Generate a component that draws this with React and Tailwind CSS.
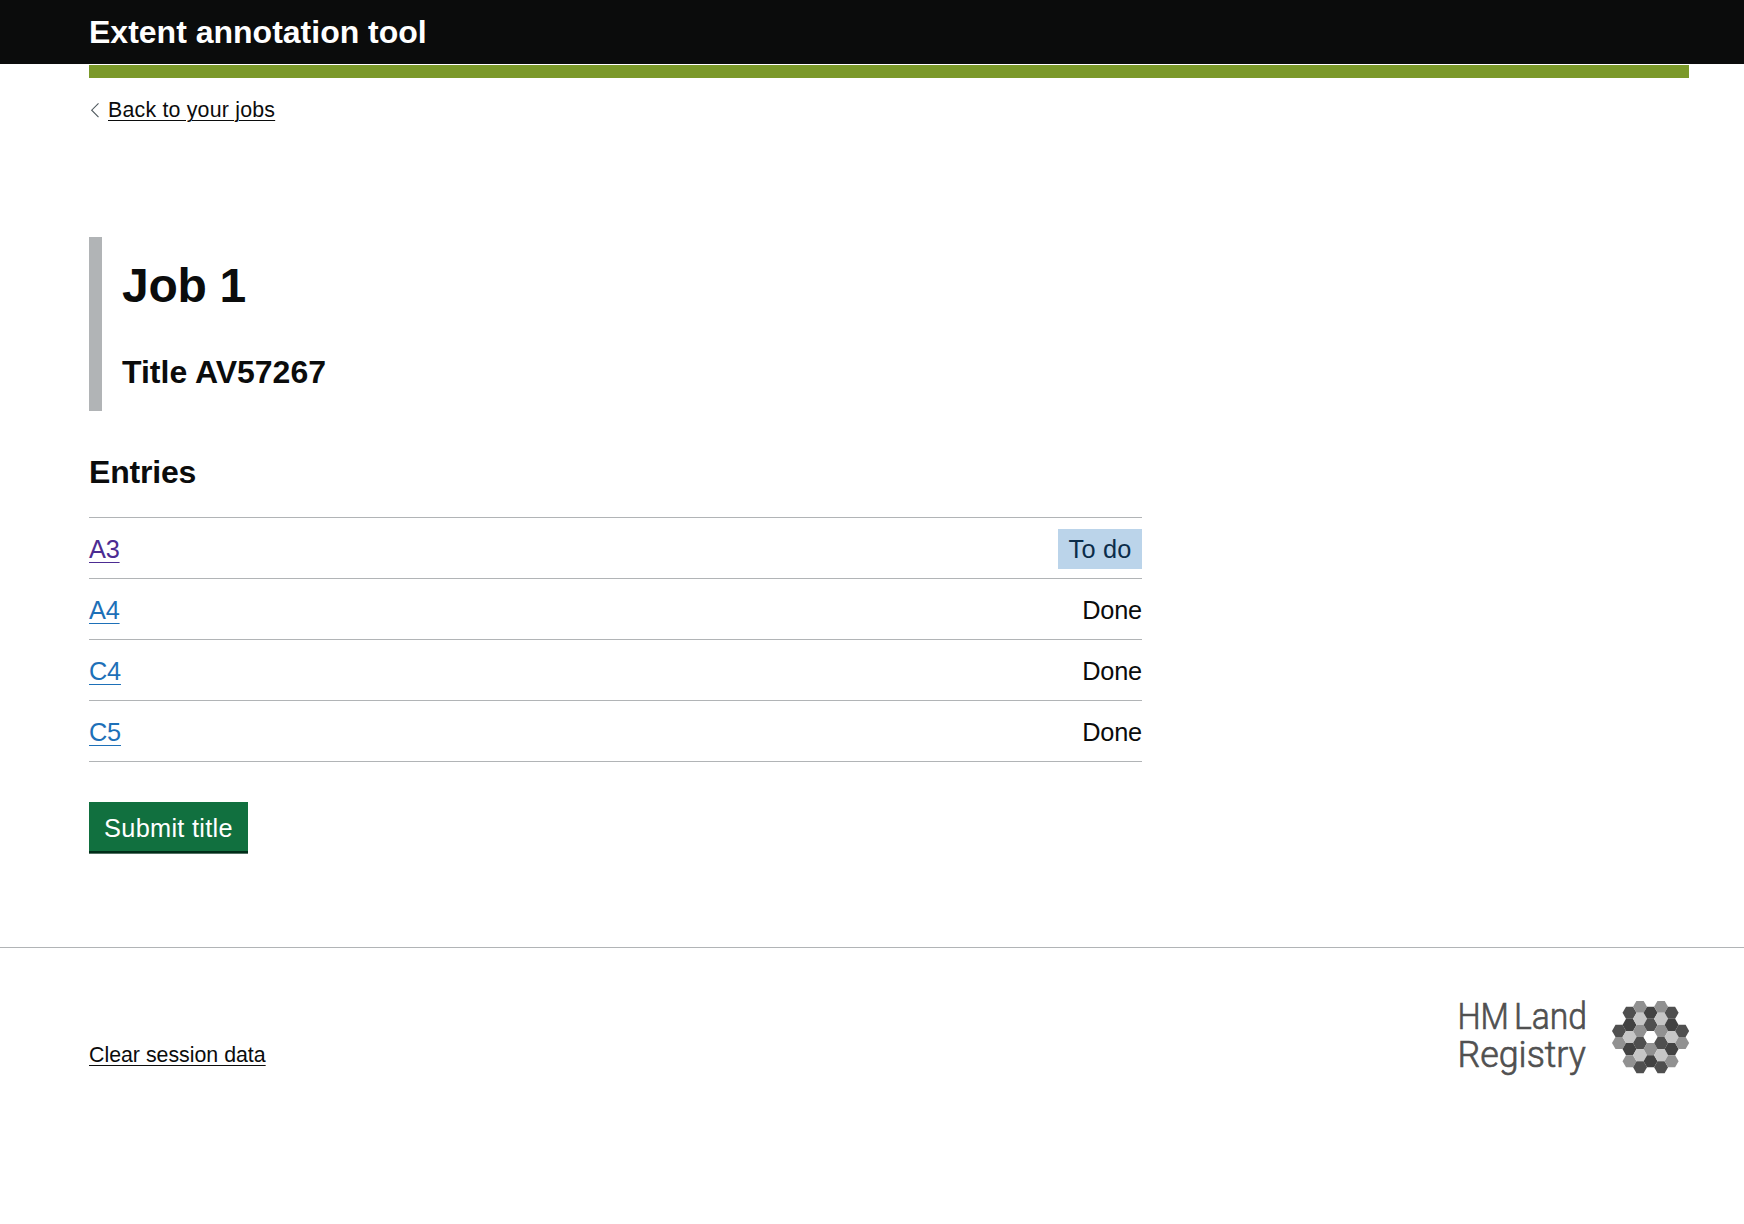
import React from "react";

const entries = [
  { name: "A3", done: false, visited: true },
  { name: "A4", done: true },
  { name: "C4", done: true },
  { name: "C5", done: true },
];

const DARKEST = "#424242";
const DARK = "#4f4f4f";
const MID = "#919191";
const LIGHT = "#c6c6c6";
const WHITE = "#ffffff";

// Honeycomb columns from left to right; each cell is listed top to bottom.
const columns = [
  { y: 29.9, cells: [DARK, MID] },
  { y: 11.8, cells: [DARK, DARKEST, LIGHT, DARKEST, MID] },
  { y: 5.8, cells: [MID, LIGHT, MID, DARK, LIGHT, DARK] },
  { y: 11.8, cells: [DARKEST, DARK, WHITE, MID, DARKEST] },
  { y: 5.8, cells: [MID, LIGHT, MID, DARK, LIGHT, DARK] },
  { y: 11.8, cells: [DARK, DARKEST, LIGHT, DARKEST, MID] },
  { y: 29.9, cells: [DARK, MID] },
];

function hexagon(cx, cy) {
  return [
    [cx - 7, cy],
    [cx - 3.5, cy - 6.05],
    [cx + 3.5, cy - 6.05],
    [cx + 7, cy],
    [cx + 3.5, cy + 6.05],
    [cx - 3.5, cy + 6.05],
  ]
    .map((p) => p.join(","))
    .join(" ");
}

function Honeycomb() {
  return (
    <svg width="78" height="73" viewBox="0 0 78 73" aria-hidden="true">
      {columns.map((col, i) =>
        col.cells.map((fill, j) => (
          <polygon key={`${i}-${j}`} points={hexagon(7 + i * 10.52, col.y + j * 12.1)} fill={fill} />
        ))
      )}
    </svg>
  );
}

function Wordmark() {
  return (
    <svg
      width="140"
      height="96"
      viewBox="-2 -10 140 96"
      className="-mt-[10px] -ml-[2px] max-w-none font-['Roboto',sans-serif] font-light"
      fill="#505050"
      stroke="#505050"
      strokeWidth="0.7"
      fontSize="37.5"
    >
      <text x="-0.6" y="31.4" textLength="51.5" lengthAdjust="spacingAndGlyphs">HM</text>
      <text x="56" y="31.4" textLength="73" lengthAdjust="spacingAndGlyphs">Land</text>
      <text x="-0.6" y="69" textLength="128.4" lengthAdjust="spacingAndGlyphs">Registry</text>
    </svg>
  );
}

export default function App() {
  return (
    <div className="min-h-[1224px] bg-white font-['Liberation_Sans',Arial,sans-serif] text-[#0b0c0c]">
      <header className="h-16 bg-[#0b0c0c]">
        <div className="ml-[89px] w-[1600px] text-[32px] leading-[64px] font-bold text-white">
          Extent annotation tool
        </div>
      </header>

      <div className="ml-[89px] w-[1600px]">
        <div className="mt-px h-[13px] bg-[#7b992a]" />

        <div className="flex pt-[19px]">
          <svg width="19" height="27" viewBox="0 0 19 27" fill="none" aria-hidden="true">
            <path d="M9.5 6.3 L2.7 13.2 L9.5 20.2" stroke="#505a5f" strokeWidth="1.1" />
          </svg>
          <a
            href="#"
            className="text-[21.33px] leading-[27px] tracking-[0.21px] underline decoration-1 underline-offset-[3px]"
          >
            Back to your jobs
          </a>
        </div>

        <main className="w-[1053px] pt-[113px]">
          <section className="h-[174px] border-l-[13px] border-[#b1b4b6] pt-5 pl-5 font-bold">
            <h1 className="text-[48px] leading-[57px] tracking-[-0.3px]">Job 1</h1>
            <h2 className="mt-[38px] text-[32px] leading-10">Title AV57267</h2>
          </section>

          <h2 className="mt-[41px] text-[32px] leading-10 font-bold tracking-[-0.2px]">Entries</h2>

          <ul className="mt-[25px] border-t border-[#b1b4b6] text-[25.33px] leading-10">
            {entries.map((e) => (
              <li
                key={e.name}
                className="flex h-[61px] items-center justify-between border-b border-[#b1b4b6] pt-[2px]"
              >
                <a
                  href="#"
                  className={
                    "tracking-[-0.2px] underline decoration-1 underline-offset-4 " +
                    (e.visited ? "text-[#4c2c92]" : "text-[#1d70b8]")
                  }
                >
                  {e.name}
                </a>
                {e.done ? (
                  <span className="tracking-[-0.2px]">Done</span>
                ) : (
                  <span className="h-10 w-[84px] bg-[#bbd4ea] text-center tracking-[0.2px] text-[#0c2d4a]">To do</span>
                )}
              </li>
            ))}
          </ul>

          <button className="mt-10 block h-[49px] w-[159px] bg-[#11703f] pt-[3px] text-center text-[25.33px] leading-[46px] tracking-[0.3px] text-white shadow-[0_2.67px_0_#002d18]">
            Submit title
          </button>
        </main>
      </div>

      <footer className="mt-24 border-t border-[#b1b4b6]">
        <div className="ml-[89px] flex w-[1600px] justify-between pt-[50px]">
          <a
            href="#"
            className="mt-[44px] h-[27px] text-[21.33px] leading-[27px] underline decoration-1 underline-offset-[3px]"
          >
            Clear session data
          </a>
          <div className="flex">
            <div className="w-[154px]">
              <Wordmark />
            </div>
            <div className="w-[77px] pt-[3px]">
              <Honeycomb />
            </div>
          </div>
        </div>
      </footer>
    </div>
  );
}
